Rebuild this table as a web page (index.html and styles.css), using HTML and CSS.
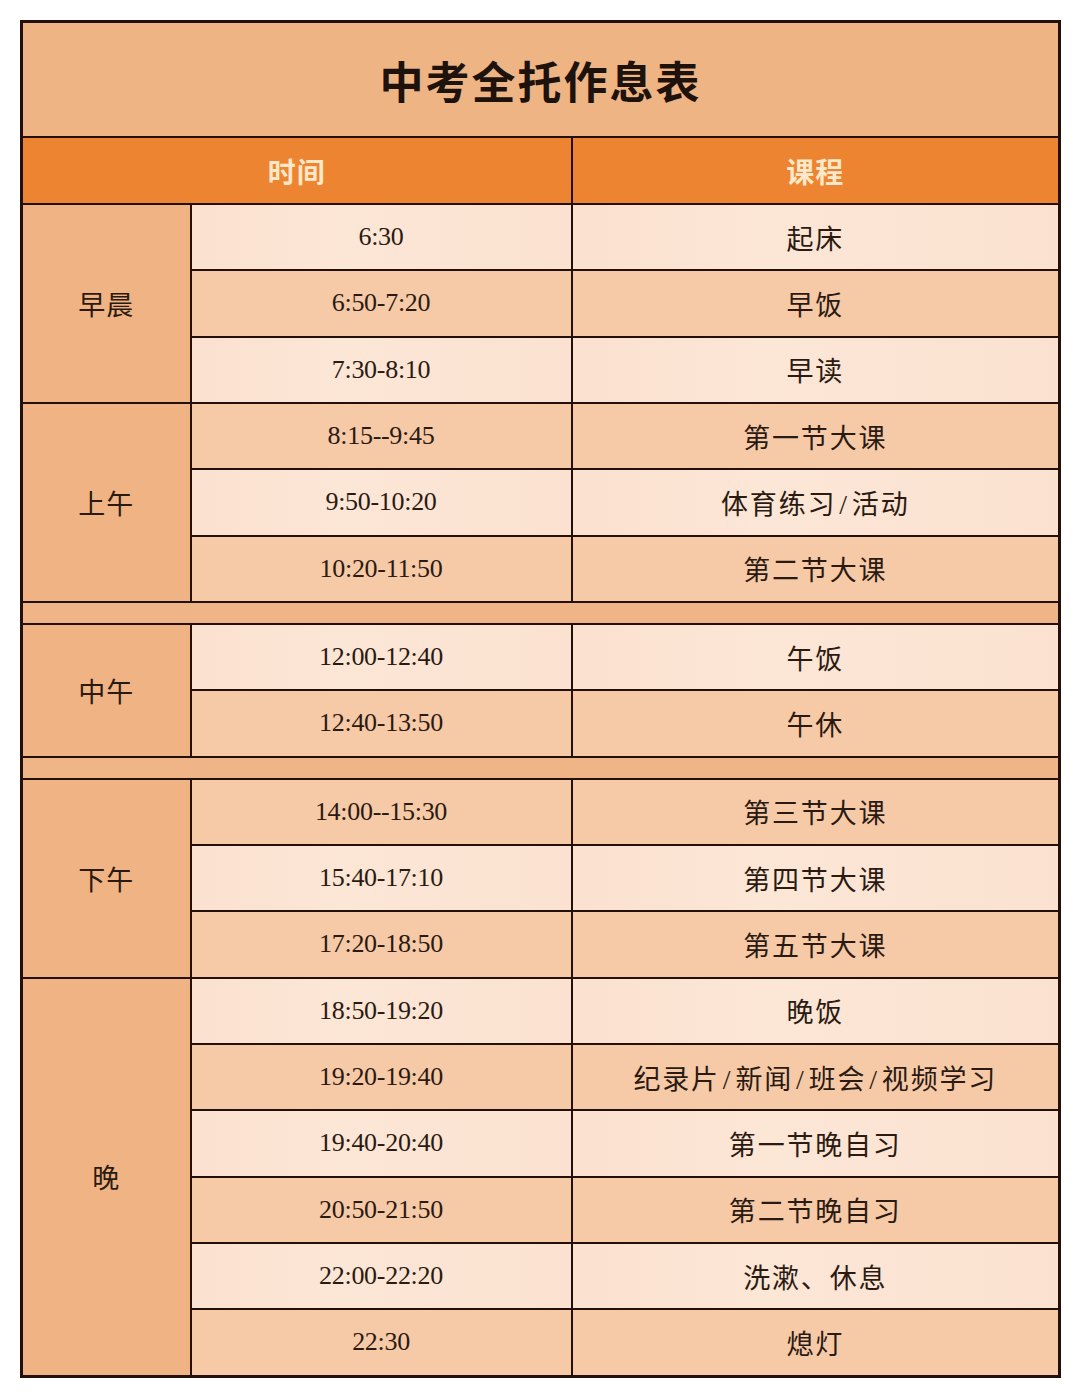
FILE: index.html
```html
<!DOCTYPE html>
<html lang="zh">
<head>
<meta charset="utf-8">
<link rel="stylesheet" href="styles.css">
</head>
<body>
<table class="sched">
  <colgroup><col class="c1"><col class="c2"><col class="c3"></colgroup>
  <tr class="title-row"><td colspan="3" class="title">中考全托作息表</td></tr>
  <tr class="head-row"><td colspan="2">时间</td><td>课程</td></tr>

  <tr class="r light"><td rowspan="3" class="grp">早晨</td><td class="t">6:30</td><td class="k">起床</td></tr>
  <tr class="r dark"><td class="t">6:50-7:20</td><td class="k">早饭</td></tr>
  <tr class="r light"><td class="t">7:30-8:10</td><td class="k">早读</td></tr>

  <tr class="r dark"><td rowspan="3" class="grp">上午</td><td class="t">8:15--9:45</td><td class="k">第一节大课</td></tr>
  <tr class="r light"><td class="t">9:50-10:20</td><td class="k">体育练习<span class="sl">/</span>活动</td></tr>
  <tr class="r dark"><td class="t">10:20-11:50</td><td class="k">第二节大课</td></tr>

  <tr class="gap"><td colspan="3"></td></tr>

  <tr class="r light"><td rowspan="2" class="grp">中午</td><td class="t">12:00-12:40</td><td class="k">午饭</td></tr>
  <tr class="r dark"><td class="t">12:40-13:50</td><td class="k">午休</td></tr>

  <tr class="gap"><td colspan="3"></td></tr>

  <tr class="r dark"><td rowspan="3" class="grp">下午</td><td class="t">14:00--15:30</td><td class="k">第三节大课</td></tr>
  <tr class="r light"><td class="t">15:40-17:10</td><td class="k">第四节大课</td></tr>
  <tr class="r dark"><td class="t">17:20-18:50</td><td class="k">第五节大课</td></tr>

  <tr class="r light"><td rowspan="6" class="grp">晚</td><td class="t">18:50-19:20</td><td class="k">晚饭</td></tr>
  <tr class="r dark"><td class="t">19:20-19:40</td><td class="k">纪录片<span class="sl">/</span>新闻<span class="sl">/</span>班会<span class="sl">/</span>视频学习</td></tr>
  <tr class="r light"><td class="t">19:40-20:40</td><td class="k">第一节晚自习</td></tr>
  <tr class="r dark"><td class="t">20:50-21:50</td><td class="k">第二节晚自习</td></tr>
  <tr class="r light"><td class="t">22:00-22:20</td><td class="k">洗漱、休息</td></tr>
  <tr class="r dark"><td class="t">22:30</td><td class="k">熄灯</td></tr>
</table>
</body>
</html>
```

FILE: styles.css
```css
html, body {
  margin: 0;
  padding: 0;
  background: #ffffff;
}
body {
  padding: 20px 0 0 20px;
  font-family: "Liberation Serif", "Noto Sans CJK SC", serif;
  color: #2a1a12;
}
.sched {
  border-collapse: collapse;
  width: 1038px;
  table-layout: fixed;
  border: 3px solid #24100a;
}
.c1 { width: 169px; }
.c2 { width: 381px; }
.c3 { width: 488px; }
.sched td {
  border: 2px solid #24100a;
  padding: 0;
  text-align: center;
  vertical-align: middle;
}
.title-row td {
  height: 113px;
  background: #efb484;
  font-size: 44px;
  font-weight: bold;
  letter-spacing: 2px;
  color: #1e120c;
}
.head-row td {
  height: 65px;
  background: #ec8431;
  color: #fde8c9;
  font-size: 28px;
  font-weight: bold;
  letter-spacing: 1px;
}
.r td {
  height: 64.33px;
}
.light td {
  background: linear-gradient(90deg, #fbe1cf, #fce6d6 40%, #fbe2d0);
}
.dark td {
  background: #f6c9a7;
}
.sched td.grp {
  background: #f0b383;
  font-size: 27px;
  letter-spacing: 1px;
}
.t {
  font-size: 26px;
  letter-spacing: -0.3px;
}
.k {
  font-size: 27px;
  letter-spacing: 1.8px;
}
.sl {
  display: inline-block;
  padding: 0 3px;
  font-size: 28px;
}
.gap td {
  height: 20px;
  background: #f0b586;
}
```
